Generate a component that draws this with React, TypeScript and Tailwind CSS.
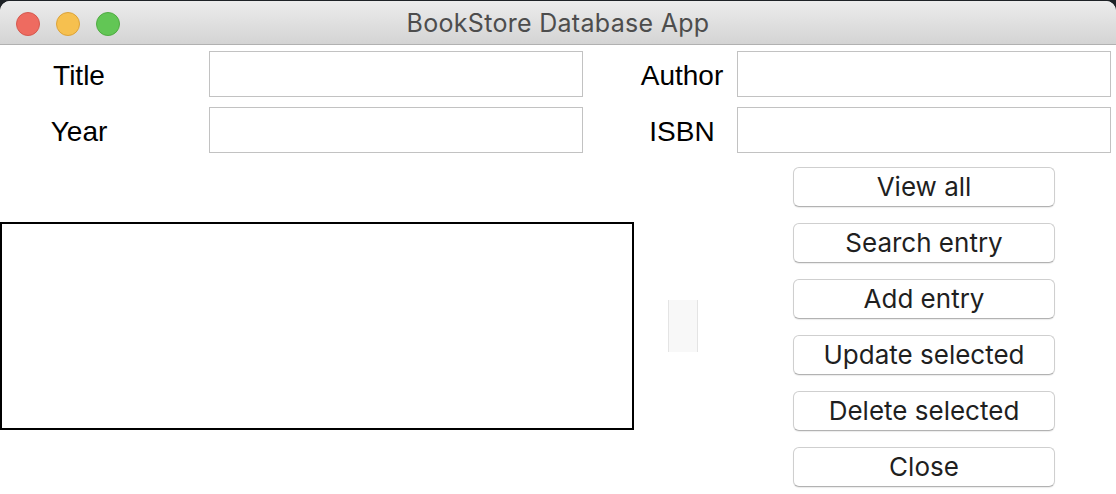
import React from "react";

const buttons = [
  "View all",
  "Search entry",
  "Add entry",
  "Update selected",
  "Delete selected",
  "Close",
];

const Field = ({ label, first }: { label: string; first?: boolean }) => (
  <div className="flex items-center">
    <div
      className={
        first
          ? "w-[158px] pt-[4px] text-center"
          : "ml-[44px] w-[110px] pt-[4px] text-center"
      }
    >
      {label}
    </div>
    <div
      className={
        first
          ? "ml-[51px] w-[374px] h-[46px] border border-[#c2c2c2] bg-white"
          : "w-[374px] h-[46px] border border-[#c2c2c2] bg-white"
      }
    />
  </div>
);

const App = () => {
  return (
    <div className="w-[1116px] h-[494px] bg-[#1e2226] pt-px overflow-hidden">
      <div className="w-full h-[493px] bg-white rounded-t-[10px] overflow-hidden">
        {/* title bar */}
        <div className="relative h-[44px] flex items-center justify-center bg-gradient-to-b from-[#ececec] to-[#d4d4d4] border-b border-[#b1b1b1]">
          <div className="absolute left-[16px] top-[11px] flex gap-[16px]">
            <span className="w-[24px] h-[24px] rounded-full bg-[#ee6b60] border border-[#d5594f]" />
            <span className="w-[24px] h-[24px] rounded-full bg-[#f6c04f] border border-[#dca33a]" />
            <span className="w-[24px] h-[24px] rounded-full bg-[#62c655] border border-[#50ab42]" />
          </div>
          <span className="pt-[3px] text-[25px] text-[#4d4d4d] font-['Inter',sans-serif] tracking-[0.3px]">
            BookStore Database App
          </span>
        </div>

        {/* entries */}
        <div className="flex flex-col gap-[10px] pt-[6px] text-[28px] text-black font-['Liberation_Sans',Arial,sans-serif]">
          <div className="flex">
            <Field label="Title" first />
            <Field label="Author" />
          </div>
          <div className="flex">
            <Field label="Year" first />
            <Field label="ISBN" />
          </div>
        </div>

        {/* list + buttons */}
        <div className="flex items-start mt-[14px]">
          <div className="mt-[55px] w-[634px] h-[208px] border-2 border-black bg-white" />
          <div className="mt-[133px] ml-[34px] w-[30px] h-[52px] bg-[#f8f8f8] border-x border-[#e4e4e4]" />
          <div className="ml-[95px] flex flex-col gap-[16px]">
            {buttons.map((b) => (
              <button
                key={b}
                className="w-[262px] h-[40px] rounded-[6px] bg-white border border-[#cfcfcf] border-b-[#b2b2b2] shadow-[0_1px_1px_rgba(0,0,0,0.08)] text-[26px] leading-none text-[#1f1f1f] font-['Inter',sans-serif]"
              >
                {b}
              </button>
            ))}
          </div>
        </div>
      </div>
    </div>
  );
};

export default App;
